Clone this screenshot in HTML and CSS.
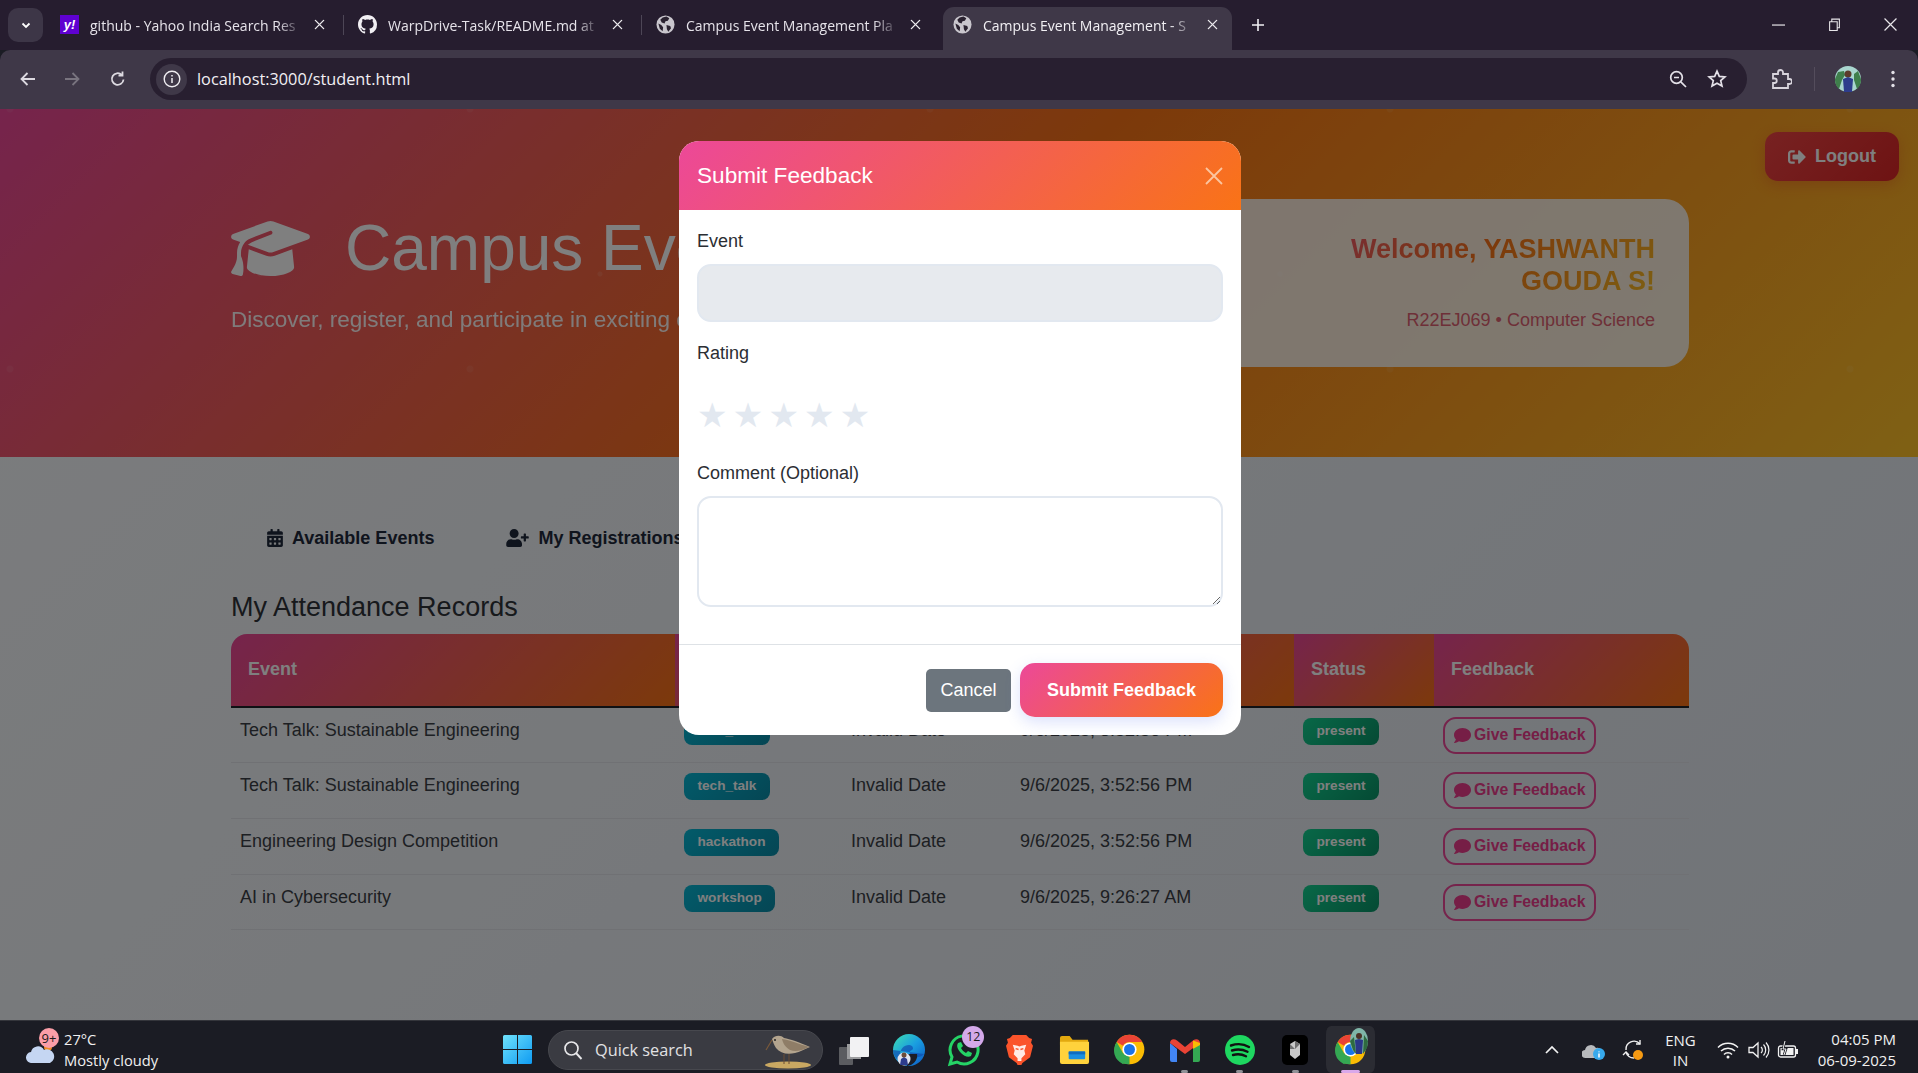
FILE: index.html
```html
<!DOCTYPE html>
<html lang="en">
<head>
<meta charset="utf-8">
<title>Campus Event Management - Student</title>
<link rel="stylesheet" href="styles.css">
</head>
<body>
<svg class="sprite" aria-hidden="true">
  <symbol id="i-comment" viewBox="0 0 512 512"><path fill="currentColor" d="M256 32C114.6 32 0 125.1 0 240c0 49.6 21.4 95 57 130.7C44.5 421.1 2.7 466 2.2 466.5c-2.2 2.3-2.8 5.7-1.5 8.7S4.8 480 8 480c66.3 0 116-31.8 140.6-51.4 32.7 12.3 69 19.4 107.4 19.4 141.4 0 256-93.1 256-208S397.4 32 256 32z"/></symbol>
  <symbol id="i-x" viewBox="0 0 12 12"><path d="M1.5 1.5l9 9M10.500 1.500l-9 9" stroke="currentColor" stroke-width="1.500" fill="none" stroke-linecap="round"/></symbol>
  <symbol id="i-globe" viewBox="0 0 20 20"><circle cx="10" cy="10" r="9.500" fill="#c9c6cd"/><path fill="#2a2230" d="M7 2.500l4-.8 3 1.800-1.500 2.500-2.500.5-1 2.500-3-1-1.500-3zM11 10.500l4 1 .8 2.500-2.800 3.500-1.500-2.500zM2.500 9l3 1.500 2 2.500-.5 4L4 14.500z"/></symbol>
  <symbol id="i-chrome" viewBox="0 0 48 48">
    <circle cx="24" cy="24" r="23" fill="#fbbc04"/>
    <path fill="#ea4335" d="M24 1a23 23 0 0 1 19.900 11.500H24a11.500 11.500 0 0 0-10 5.800L4.100 12.500A23 23 0 0 1 24 1z"/>
    <path fill="#34a853" d="M4.100 12.500L14 29.700a11.500 11.500 0 0 0 10 5.800L14.100 46.700A23 23 0 0 1 4.100 12.500z"/>
    <path fill="#34a853" d="M14 29.700L24 35.500 24 47A23 23 0 0 1 4 35.500z"/>
    <circle cx="24" cy="24" r="11" fill="#fff"/><circle cx="24" cy="24" r="8.500" fill="#1a73e8"/>
  </symbol>
</svg>

<header class="tabstrip">
  <button class="tablist"><svg width="12" height="12" viewBox="0 0 12 12"><path d="M2.500 4.500L6 8l3.500-3.500" stroke="#fff" stroke-width="1.800" fill="none"/></svg></button>
  <div class="tab">
    <span class="yahoo">y!</span>
    <span class="tab-title">github - Yahoo India Search Res</span>
    <svg class="tab-close"><use href="#i-x"/></svg>
  </div>
  <i class="tab-sep"></i>
  <div class="tab">
    <svg class="fav" viewBox="0 0 16 16"><path fill="#f1eff3" d="M8 0C3.580 0 0 3.580 0 8c0 3.540 2.290 6.530 5.470 7.590.4.070.55-.17.55-.38 0-.19-.01-.82-.01-1.490-2.010.37-2.530-.49-2.690-.94-.09-.23-.48-.94-.82-1.130-.28-.15-.68-.52-.01-.53.63-.01 1.080.58 1.230.82.720 1.210 1.870.87 2.330.66.070-.52.280-.87.510-1.070-1.780-.2-3.640-.89-3.640-3.950 0-.87.310-1.590.820-2.150-.08-.2-.36-1.020.08-2.120 0 0 .67-.21 2.200.820.64-.18 1.320-.27 2-.27s1.360.09 2 .27c1.530-1.040 2.200-.82 2.200-.82.44 1.100.16 1.920.08 2.120.51.560.82 1.270.82 2.150 0 3.070-1.870 3.750-3.650 3.950.29.250.54.730.54 1.480 0 1.070-.01 1.930-.01 2.200 0 .21.150.46.550.38A8.010 8.010 0 0 0 16 8c0-4.420-3.580-8-8-8z"/></svg>
    <span class="tab-title">WarpDrive-Task/README.md at</span>
    <svg class="tab-close"><use href="#i-x"/></svg>
  </div>
  <i class="tab-sep"></i>
  <div class="tab">
    <svg class="fav"><use href="#i-globe"/></svg>
    <span class="tab-title">Campus Event Management Pla</span>
    <svg class="tab-close"><use href="#i-x"/></svg>
  </div>
  <div class="tab tab-active">
    <svg class="fav"><use href="#i-globe"/></svg>
    <span class="tab-title">Campus Event Management - S</span>
    <svg class="tab-close"><use href="#i-x"/></svg>
  </div>
  <svg class="newtab" viewBox="0 0 14 14"><path d="M7 1v12M1 7h12" stroke="#f1eff3" stroke-width="1.600"/></svg>
  <div class="winctl">
    <svg viewBox="0 0 12 12"><path d="M0 6.500h12" stroke="#e8e6ea" stroke-width="1.100"/></svg>
    <svg viewBox="0 0 12 12"><path d="M1.500 3.500h7v8h-7zM3.500 3.500v-2.500h7v8h-2" stroke="#e8e6ea" fill="none"/></svg>
    <svg viewBox="0 0 12 12"><path d="M.5.500l11 11M11.500.500l-11 11" stroke="#e8e6ea" stroke-width="1.100"/></svg>
  </div>
</header>

<nav class="toolbar">
  <svg class="tool" viewBox="0 0 20 20"><path d="M17 10H4M9.500 4L3.500 10l6 6" stroke="#dcd9e0" stroke-width="1.800" fill="none"/></svg>
  <svg class="tool" viewBox="0 0 20 20"><path d="M3 10h13M10.500 4l6 6-6 6" stroke="#79747f" stroke-width="1.800" fill="none"/></svg>
  <svg class="tool" viewBox="0 0 20 20"><path d="M15.500 10.500a5.800 5.800 0 1 1-1.800-4.700M14.500 2.500v4h-4" stroke="#dcd9e0" stroke-width="1.800" fill="none"/></svg>
  <div class="omnibox">
    <span class="site-info"><svg viewBox="0 0 18 18" width="18" height="18"><circle cx="9" cy="9" r="7.800" stroke="#efedf1" stroke-width="1.400" fill="none"/><path d="M9 8v5M9 5v1.600" stroke="#efedf1" stroke-width="1.500"/></svg></span>
    <span class="url">localhost:3000/student.html</span>
    <svg class="omni-icon zoomout" viewBox="0 0 20 20"><circle cx="8.500" cy="8.500" r="5.800" stroke="#e4e1e8" stroke-width="1.700" fill="none"/><path d="M12.800 12.800L18 18M6 8.500h5" stroke="#e4e1e8" stroke-width="1.700"/></svg>
    <svg class="omni-icon" viewBox="0 0 20 20"><path d="M10 2.200l2.300 5.200 5.600.5-4.200 3.700 1.300 5.500L10 14.200 5 17.100l1.300-5.500-4.200-3.700 5.600-.5z" stroke="#e4e1e8" stroke-width="1.700" fill="none"/></svg>
  </div>
  <svg class="ext" viewBox="0 0 22 22"><path d="M3 6h5V4.500a2.500 2.500 0 0 1 5 0V6h5v5h1.500a2.500 2.500 0 0 1 0 5H18v4H3v-5h1.500a2 2 0 0 0 0-4.500H3z" stroke="#d8d4dc" stroke-width="1.800" fill="none"/></svg>
  <i class="tool-sep"></i>
  <svg class="avatar" viewBox="0 0 26 26"><circle cx="13" cy="13" r="13" fill="#a9d6cf"/><path d="M0 13a13 13 0 0 0 4 10l3-9 3-5-1-4-6 1z" fill="#3f7f4c"/><path d="M26 13a13 13 0 0 1-4 10l-3-9 0-6 4-3z" fill="#3f7f4c"/><circle cx="13" cy="8" r="3.500" fill="#5c3b2c"/><path d="M8 13l5-2 5 2-1 13H9z" fill="#2d3c8c"/></svg>
  <svg class="kebab" viewBox="0 0 4 18"><circle cx="2" cy="2.500" r="1.700" fill="#e4e1e8"/><circle cx="2" cy="9" r="1.700" fill="#e4e1e8"/><circle cx="2" cy="15.500" r="1.700" fill="#e4e1e8"/></svg>
</nav>

<div class="viewport">
  <section class="hero">
    <div class="hero-inner">
      <div class="hero-text">
        <h1 class="hero-title">
          <svg class="cap" viewBox="0 0 640 512"><path fill="currentColor" d="M320 32c-8.100 0-16.100 1.400-23.700 4.100L15.800 137.400C6.300 140.900 0 149.900 0 160s6.300 19.100 15.800 22.600l57.900 20.900C57.300 229.300 48 259.800 48 291.900v28.100c0 28.400-10.800 57.700-22.300 80.800c-6.500 13-13.900 25.800-22.500 37.600C0 442.700-.9 448.300 .9 453.400s6 8.900 11.200 10.200l64 16c4.200 1.100 8.700 .3 12.400-2s6.300-6.100 7.100-10.400c8.600-42.800 4.300-81.200-2.100-108.700C90.300 344.300 86 329.800 80 316.500V291.900c0-30.200 10.200-58.700 27.900-81.500c12.900-15.500 29.600-28 49.200-35.700l157-61.700c8.200-3.200 17.500 .8 20.700 9s-.8 17.500-9 20.700l-157 61.700c-12.400 4.900-23.300 12.400-32.200 21.600l159.600 57.600c7.600 2.700 15.600 4.100 23.700 4.100s16.100-1.400 23.700-4.100L624.200 182.600c9.500-3.400 15.800-12.500 15.800-22.600s-6.300-19.100-15.800-22.600L343.700 36.100C336.100 33.400 328.100 32 320 32zM128 408c0 35.300 86 72 192 72s192-36.700 192-72L496.700 262.600 354.500 314c-11.100 4-22.800 6-34.500 6s-23.500-2-34.500-6L143.300 262.600 128 408z"/></svg>
          Campus Event Management
        </h1>
        <p class="hero-sub">Discover, register, and participate in exciting events</p>
      </div>
      <div class="welcome">
        <div class="welcome-name">Welcome, YASHWANTH GOUDA S!</div>
        <div class="welcome-meta">R22EJ069 • Computer Science</div>
      </div>
    </div>
    <button class="logout">
      <svg viewBox="0 0 512 512" width="18" height="18"><path fill="currentColor" d="M497 273L329 441c-15 15-41 4.500-41-17v-96H152c-13.300 0-24-10.700-24-24v-96c0-13.300 10.700-24 24-24h136V88c0-21.400 25.900-32 41-17l168 168c9.300 9.400 9.300 24.600 0 34zM192 436v-40c0-6.600-5.400-12-12-12H96c-17.700 0-32-14.300-32-32V160c0-17.700 14.300-32 32-32h84c6.600 0 12-5.400 12-12V76c0-6.600-5.400-12-12-12H96c-53 0-96 43-96 96v192c0 53 43 96 96 96h84c6.600 0 12-5.400 12-12z"/></svg>
      Logout
    </button>
  </section>

  <main class="content">
    <div class="navtabs">
      <a class="navtab">
        <svg class="navicon" viewBox="0 0 448 512"><path fill="currentColor" d="M0 464c0 26.500 21.500 48 48 48h352c26.500 0 48-21.500 48-48V192H0v272zm320-196c0-6.600 5.400-12 12-12h40c6.600 0 12 5.400 12 12v40c0 6.600-5.400 12-12 12h-40c-6.600 0-12-5.400-12-12v-40zm0 128c0-6.600 5.400-12 12-12h40c6.600 0 12 5.400 12 12v40c0 6.600-5.400 12-12 12h-40c-6.600 0-12-5.400-12-12v-40zM192 268c0-6.600 5.400-12 12-12h40c6.600 0 12 5.400 12 12v40c0 6.600-5.400 12-12 12h-40c-6.600 0-12-5.400-12-12v-40zm0 128c0-6.600 5.400-12 12-12h40c6.600 0 12 5.400 12 12v40c0 6.600-5.400 12-12 12h-40c-6.600 0-12-5.400-12-12v-40zM64 268c0-6.600 5.400-12 12-12h40c6.600 0 12 5.400 12 12v40c0 6.600-5.400 12-12 12H76c-6.600 0-12-5.400-12-12v-40zm0 128c0-6.600 5.400-12 12-12h40c6.600 0 12 5.400 12 12v40c0 6.600-5.400 12-12 12H76c-6.600 0-12-5.400-12-12v-40zM400 64h-48V16c0-8.800-7.200-16-16-16h-32c-8.800 0-16 7.200-16 16v48H160V16c0-8.800-7.200-16-16-16h-32c-8.800 0-16 7.200-16 16v48H48C21.500 64 0 85.500 0 112v48h448v-48c0-26.500-21.500-48-48-48z"/></svg>
        Available Events
      </a>
      <a class="navtab">
        <svg class="navicon navicon-wide" viewBox="0 0 640 512"><path fill="currentColor" d="M624 208h-64v-64c0-8.800-7.200-16-16-16h-32c-8.800 0-16 7.200-16 16v64h-64c-8.800 0-16 7.200-16 16v32c0 8.800 7.200 16 16 16h64v64c0 8.800 7.200 16 16 16h32c8.800 0 16-7.200 16-16v-64h64c8.800 0 16-7.200 16-16v-32c0-8.800-7.200-16-16-16zm-400 48c70.700 0 128-57.300 128-128S294.700 0 224 0 96 57.300 96 128s57.300 128 128 128zm89.600 32h-16.700c-22.200 10.200-46.900 16-72.900 16s-50.600-5.800-72.900-16h-16.700C60.200 288 0 348.200 0 422.400V464c0 26.500 21.500 48 48 48h352c26.500 0 48-21.500 48-48v-41.600c0-74.200-60.200-134.400-134.400-134.400z"/></svg>
        My Registrations
      </a>
    </div>
    <h2 class="section-title">My Attendance Records</h2>
    <table class="records">
      <colgroup><col class="c-event"><col class="c-type"><col class="c-date"><col class="c-att"><col class="c-status"><col class="c-fb"></colgroup>
      <thead><tr><th>Event</th><th>Type</th><th>Date</th><th>Attended At</th><th>Status</th><th>Feedback</th></tr></thead>
      <tbody>
        <tr><td>Tech Talk: Sustainable Engineering</td><td><span class="badge badge-type">tech_talk</span></td><td>Invalid Date</td><td>9/6/2025, 3:52:56 PM</td><td><span class="badge badge-ok">present</span></td><td><button class="fb-btn"><svg class="fb-icon"><use href="#i-comment"/></svg>Give Feedback</button></td></tr>
        <tr><td>Tech Talk: Sustainable Engineering</td><td><span class="badge badge-type">tech_talk</span></td><td>Invalid Date</td><td>9/6/2025, 3:52:56 PM</td><td><span class="badge badge-ok">present</span></td><td><button class="fb-btn"><svg class="fb-icon"><use href="#i-comment"/></svg>Give Feedback</button></td></tr>
        <tr><td>Engineering Design Competition</td><td><span class="badge badge-type">hackathon</span></td><td>Invalid Date</td><td>9/6/2025, 3:52:56 PM</td><td><span class="badge badge-ok">present</span></td><td><button class="fb-btn"><svg class="fb-icon"><use href="#i-comment"/></svg>Give Feedback</button></td></tr>
        <tr><td>AI in Cybersecurity</td><td><span class="badge badge-type">workshop</span></td><td>Invalid Date</td><td>9/6/2025, 9:26:27 AM</td><td><span class="badge badge-ok">present</span></td><td><button class="fb-btn"><svg class="fb-icon"><use href="#i-comment"/></svg>Give Feedback</button></td></tr>
      </tbody>
    </table>
  </main>

  <div class="backdrop"></div>

  <div class="modal">
    <div class="modal-head">
      <h3 class="modal-title">Submit Feedback</h3>
      <svg class="modal-close" viewBox="0 0 18 18"><path d="M1 1l16 16M17 1L1 17" stroke="#fbc5a0" stroke-width="1.800"/></svg>
    </div>
    <div class="modal-body">
      <label class="field-label">Event</label>
      <select class="field-select" disabled><option></option></select>
      <label class="field-label">Rating</label>
      <div class="stars"><span class="star">★</span><span class="star">★</span><span class="star">★</span><span class="star">★</span><span class="star">★</span></div>
      <label class="field-label">Comment (Optional)</label>
      <textarea class="field-text"></textarea>
    </div>
    <div class="modal-foot">
      <button class="btn-cancel">Cancel</button>
      <button class="btn-submit">Submit Feedback</button>
    </div>
  </div>
</div>

<footer class="taskbar">
  <div class="weather">
    <span class="wx-icon">
      <svg viewBox="0 0 32 26" width="32" height="26"><circle cx="23" cy="10" r="4" fill="#f08a24"/><path d="M7 26a5.500 5.500 0 0 1-1-11 7 7 0 0 1 13-2 6.500 6.500 0 0 1 6 13z" fill="#c5d6f2"/></svg>
      <span class="wx-badge">9+</span>
    </span>
    <span class="wx-text"><span class="wx-temp">27°C</span><span class="wx-desc">Mostly cloudy</span></span>
  </div>
  <svg class="winlogo" viewBox="0 0 29 29"><defs><linearGradient id="wg" x1="0" y1="0" x2="1" y2="1"><stop offset="0" stop-color="#6fe2fb"/><stop offset="1" stop-color="#0f9bf2"/></linearGradient></defs><path fill="url(#wg)" d="M0 1.500A1.500 1.500 0 0 1 1.500 0H14v14H0zM15 0h12.500A1.500 1.500 0 0 1 29 1.500V14H15zM0 15h14v14H1.500A1.500 1.500 0 0 1 0 27.500zM15 15h14v12.500a1.500 1.500 0 0 1-1.500 1.500H15z"/></svg>
  <div class="searchbox">
    <svg viewBox="0 0 20 20" width="20" height="20"><circle cx="8.500" cy="8.500" r="6.500" stroke="#e8e8ea" stroke-width="1.700" fill="none"/><path d="M13 13l5.500 6" stroke="#e8e8ea" stroke-width="1.900"/></svg>
    <span class="search-text">Quick search</span>
    <svg class="bird" viewBox="0 0 50 38" width="50" height="38"><ellipse cx="26" cy="34" rx="23" ry="3.500" fill="#c9a862"/><path d="M10 8c3-4 9-4 12-1 6 1 15 4 26 9-6 2-10 5-15 6-8 2-15 0-19-5-2-3-3-6-4-9z" fill="#b3a48e"/><path d="M20 8c8 1 17 5 27 8-8 4-14 5-19 3-5-3-7-7-8-11z" fill="#8f7d67"/><path d="M10 9L4 19" stroke="#7a5a3a" stroke-width="1.200"/><path d="M22 23v10M27 23v10" stroke="#6a4d33"/><circle cx="13" cy="9" r="1" fill="#222"/></svg>
  </div>
  <div class="tb-apps">
    <span class="tb-app"><svg viewBox="0 0 30 30" width="30" height="30"><rect x="0" y="12" width="14" height="18" rx="1" fill="#5b5c60"/><rect x="8" y="9" width="14" height="15" fill="#9b9c9e"/><rect x="11" y="2" width="19" height="20" rx="1" fill="#f2f2f3"/></svg></span>
    <span class="tb-app"><svg viewBox="0 0 32 32" width="32" height="32"><defs><linearGradient id="eg" x1="0" y1="0" x2="1" y2="1"><stop offset="0" stop-color="#3ee0b0"/><stop offset=".5" stop-color="#1a9ee0"/><stop offset="1" stop-color="#0b57c4"/></linearGradient></defs><circle cx="16" cy="16" r="16" fill="url(#eg)"/><path d="M31 20c-3 4-9 4-12 2-3-2-3-5 0-6 2-1 1-5-3-5-5 0-9 4-9 10 0 3 1 6 3 8-6-2-10-7-10-13" fill="#0f4fb0" opacity=".7"/><path d="M14 32V20h10c1 4-2 9-6 11z" fill="#1c1d26"/><circle cx="11" cy="25" r="6.500" fill="#dfe4f0"/><path d="M7 31l1-6 3-2 3 2 1 6z" fill="#2d3c8c"/><circle cx="11" cy="21" r="2.500" fill="#6b4a38"/></svg></span>
    <span class="tb-app"><svg viewBox="0 0 34 34" width="34" height="34"><path d="M3 31l2-7a14 14 0 1 1 5 5z" fill="none" stroke="#25d366" stroke-width="3"/><path d="M11 10c-2 3 0 7 3 10s7 5 10 3l1-3-4-2-2 2c-2-1-4-3-5-5l2-2-2-4z" fill="#25d366"/></svg><span class="tb-badge">12</span></span>
    <span class="tb-app"><svg viewBox="0 0 28 32" width="27" height="31"><path d="M7 1h14l3 3 3 1-1 4 2 3-3 12-8 6-1 2h-4l-1-2-8-6L0 12l2-3-1-4 3-1z" fill="#fb542b"/><path d="M7 11l5 1 2 1 2-1 5-1-2 6 1 4-4 4v3h-4v-3l-4-4 1-4z" fill="#fff" opacity=".88"/><path d="M10 15l3 1M18 15l-3 1" stroke="#fb542b" stroke-width="1.400"/></svg></span>
    <span class="tb-app"><svg viewBox="0 0 32 32" width="31" height="31"><path d="M1 4a2 2 0 0 1 2-2h8l3 4h16v5H1z" fill="#e3a90f"/><path d="M1 8h30v21a2 2 0 0 1-2 2H3a2 2 0 0 1-2-2z" fill="#ffd23c"/><rect x="10" y="18" width="17" height="8" rx="1" fill="#1b8fe0"/><rect x="10" y="18" width="17" height="3" fill="#0f6cc0"/></svg></span>
    <span class="tb-app"><svg width="31" height="31"><use href="#i-chrome"/></svg></span>
    <span class="tb-app"><svg viewBox="0 0 30 24" width="30" height="24"><path d="M0 5v17a2 2 0 0 0 2 2h5V11z" fill="#4285f4"/><path d="M30 5v17a2 2 0 0 1-2 2h-5V11z" fill="#34a853"/><path d="M0 5l15 11 0-7L7 2.500C4 0 0 1 0 5z" fill="#ea4335"/><path d="M30 5L15 16V9l8-6.500C26 0 30 1 30 5z" fill="#ea4335"/><path d="M23 2.500L30 5v2l-7 4z" fill="#fbbc04"/></svg></span>
    <span class="tb-app"><svg viewBox="0 0 30 30" width="30" height="30"><circle cx="15" cy="15" r="15" fill="#1ed760"/><path d="M6 10.500c6-2 13-1.500 18 1.500M7 15.500c5-1.500 11-1 15.500 1.300M8 20c4.500-1.200 9-.8 13 1.200" stroke="#111" stroke-width="2.400" fill="none" stroke-linecap="round"/></svg></span>
    <span class="tb-app"><svg viewBox="0 0 26 30" width="26" height="30"><rect width="26" height="30" rx="5" fill="#000"/><path d="M8 9l5-3 5 3v11l-5 4-5-4z" fill="#c8c8c8"/><path d="M13 6v8l5-5zM13 14l-5-5v5z" fill="#6e6e6e"/></svg></span>
    <span class="tb-app tb-active"><svg width="31" height="31"><use href="#i-chrome"/></svg><svg class="tb-over" viewBox="0 0 18 26" width="18" height="26"><ellipse cx="9" cy="13" rx="9" ry="13" fill="#7fb6a8"/><path d="M0 13l4-4 2 17-3-4zM18 13l-4-6-1 19 4-6z" fill="#2e6b40"/><circle cx="9" cy="8" r="3" fill="#4c3125"/><path d="M5 12l4-1 4 1-1 14H6z" fill="#2a3788"/></svg></span>
  </div>
  <div class="tray">
    <svg viewBox="0 0 14 9" width="14" height="9"><path d="M1 8l6-6 6 6" stroke="#f2f2f2" stroke-width="1.700" fill="none"/></svg>
    <svg class="tray-od" viewBox="0 0 24 22" width="24" height="22"><path d="M4 19a4 4 0 0 1-1-8 6 6 0 0 1 11-2 5 5 0 0 1 3 10z" fill="#b8babd"/><circle cx="17" cy="15" r="6" fill="#37a9ec"/><path d="M17 12.500v.800M17 14.500v4" stroke="#fff" stroke-width="1.500"/></svg>
    <svg class="tray-sync" viewBox="0 0 24 24" width="24" height="24"><path d="M4 12A8 8 0 0 1 18 6M12 20a8 8 0 0 1-8-6" stroke="#f0f0f0" stroke-width="1.400" fill="none"/><path d="M18 2v4h-4M1 17l3-3 3 3" stroke="#f0f0f0" stroke-width="1.400" fill="none"/><circle cx="16" cy="17" r="5" fill="#f59a13"/></svg>
    <span class="lang"><span>ENG</span><span>IN</span></span>
    <svg class="tray-wifi" viewBox="0 0 22 18" width="22" height="18"><path d="M1 6.500a14 14 0 0 1 20 0M4 10a10 10 0 0 1 14 0M7 13.500a5.500 5.500 0 0 1 8 0" stroke="#f2f2f2" stroke-width="1.500" fill="none"/><circle cx="11" cy="16" r="1.500" fill="#f2f2f2"/></svg>
    <svg class="tray-vol" viewBox="0 0 22 18" width="22" height="18"><path d="M1 6.500h4l5-4.500v14l-5-4.500H1z" stroke="#f2f2f2" stroke-width="1.300" fill="none"/><path d="M13 6a4 4 0 0 1 0 6M15.500 3.500a8 8 0 0 1 0 11M18 1.500a11 11 0 0 1 0 15" stroke="#f2f2f2" stroke-width="1.200" fill="none"/></svg>
    <svg viewBox="0 0 22 18" width="22" height="18"><rect x="1.500" y="5" width="17" height="11" rx="2" stroke="#f2f2f2" stroke-width="1.300" fill="none"/><rect x="3.500" y="7" width="13" height="7" fill="#f2f2f2"/><path d="M20 8v5" stroke="#f2f2f2" stroke-width="2"/><path d="M8 0L6 8h3l-2 6" stroke="#1b1c24" stroke-width="2.500" fill="none"/><path d="M8 0L6 8h3l-2 6" stroke="#f2f2f2" stroke-width="1" fill="none"/></svg>
    <span class="clock"><span>04:05 PM</span><span>06-09-2025</span></span>
  </div>
</footer>
</body>
</html>
```

FILE: styles.css
```css
* { box-sizing: border-box; }
html, body { margin: 0; height: 100%; }
body {
  width: 1918px;
  height: 1073px;
  overflow: hidden;
  font-family: "Liberation Sans", Arial, sans-serif;
  display: flex;
  flex-direction: column;
  background: #1b1c24;
}
.sprite { display: none; }
button { font-family: inherit; border: 0; cursor: pointer; }

/* Browser tab strip */
.tabstrip {
  height: 50px;
  flex: none;
  display: flex;
  align-items: flex-start;
  background: #261d2f;
  padding-left: 8px;
  font-family: "Open Sans", sans-serif;
  font-size: 14px;
  color: #e6e3ea;
}
.tablist {
  width: 35px; height: 34px; margin-top: 8px; margin-right: 7px;
  border-radius: 10px; background: #3d3647;
  display: flex; align-items: center; justify-content: center; padding: 0;
}
.tab {
  width: 293px; height: 43px; margin-top: 7px;
  display: flex; align-items: center;
  padding: 0 18px 8px 10px;
  gap: 11px;
  flex: none;
}
.tab-sep { width: 1px; height: 20px; margin-top: 15px; background: #4d4656; flex: none; margin-right: 4px; }
.tab-title {
  flex: 1; white-space: nowrap; overflow: hidden; padding-top: 1px;
  -webkit-mask-image: linear-gradient(90deg, #000 88%, transparent 100%);
  mask-image: linear-gradient(90deg, #000 88%, transparent 100%);
}
.tab-close { width: 11px; height: 11px; color: #eceaee; flex: none; }
.fav { width: 19px; height: 19px; flex: none; }
.yahoo {
  width: 19px; height: 19px; flex: none; background: #5f01d1; color: #fff;
  font: italic 700 13px/19px "Liberation Sans", sans-serif; text-align: center;
}
.tab-active {
  width: 289px; margin-left: 4px; height: 43px; background: #3f3848;
  border-radius: 11px 11px 0 0; padding: 0 14px 8px 10px; color: #f2f0f4;
}
.newtab { width: 14px; height: 14px; margin: 18px 0 0 19px; flex: none; }
.winctl { margin-left: auto; display: flex; gap: 43px; margin-top: 18px; padding-right: 21px; }
.winctl svg { width: 13px; height: 13px; }

/* Toolbar */
.toolbar {
  height: 59px; flex: none; background: #3f3848;
  border-radius: 10px 10px 0 0;
  display: flex; align-items: center;
  padding: 0 0 1px 18px;
  margin-top: 0;
}
.tool { width: 20px; height: 20px; margin-right: 24px; flex: none; }
.tool:nth-child(2) { margin-right: 26px; }
.tool:nth-child(3) { margin-right: 22px; }
.omnibox {
  width: 1597px; height: 42px; background: #281f30; border-radius: 21px;
  display: flex; align-items: center; padding: 0 20px 0 6px; flex: none;
  margin-left: 0;
}
.site-info {
  width: 31px; height: 31px; border-radius: 50%; background: #3f3848;
  display: flex; align-items: center; justify-content: center; flex: none;
}
.url { margin-left: 10px; font: 16.300px "Open Sans", sans-serif; color: #f2f0f4; flex: 1; }
.omni-icon { width: 20px; height: 20px; flex: none; }
.zoomout { margin-right: 19px; }
.ext { width: 22px; height: 22px; margin-left: 23px; flex: none; }
.tool-sep { width: 1px; height: 24px; background: #544d5c; margin-left: 22px; flex: none; }
.avatar { width: 26px; height: 26px; margin-left: 20px; flex: none; }
.kebab { width: 4px; height: 18px; margin-left: 30px; flex: none; }

/* Page area */
.viewport {
  position: relative;
  flex: 1;
  min-height: 0;
  overflow: hidden;
  background: linear-gradient(135deg, #f8fafc 0%, #e2e8f0 100%);
}
.hero {
  height: 348px;
  position: relative;
  color: #fff;
  background:
    radial-gradient(circle, rgba(255,255,255,.1) 2px, transparent 3px) 90px 60px / 340px 210px,
    radial-gradient(circle, rgba(255,255,255,.07) 3px, transparent 4px) 240px 130px / 460px 260px,
    linear-gradient(135deg, #ec4899 0%, #f97316 50%, #ffc229 100%);
  display: flex;
  align-items: center;
  padding-left: 231px;
}
.hero-inner {
  width: 1458px;
  display: flex;
  justify-content: space-between;
  align-items: center;
}
.hero-text { padding-bottom: 21.600px; }
.hero-title {
  margin: 0 0 17.600px;
  font-size: 64px;
  line-height: 77px;
  font-weight: 400;
  display: flex;
  align-items: center;
  gap: 35px;
  white-space: nowrap;
}
.cap { width: 79px; height: 63px; flex: none; }
.hero-sub { margin: 0; font-size: 22.500px; line-height: 30px; opacity: .95; white-space: nowrap; }
.welcome {
  width: 480px;
  height: 168px;
  border-radius: 24px;
  background: rgba(255,255,255,.85);
  padding: 34px 34px 0;
  text-align: right;
  flex: none;
}
.welcome-name {
  font-size: 27px; line-height: 32px; font-weight: 700;
  background: linear-gradient(135deg, #ec4899, #f97316 55%, #fbbf24);
  -webkit-background-clip: text; background-clip: text;
  color: transparent;
}
.welcome-meta { margin-top: 11px; font-size: 18px; line-height: 24px; color: #dd6070; }
.logout {
  position: absolute; right: 19px; top: 23px;
  width: 134px; height: 49px; border-radius: 13px;
  background: linear-gradient(135deg, #ef4444, #dc2626);
  color: #fff; font-size: 18px; font-weight: 700;
  display: flex; align-items: center; justify-content: center; gap: 9px;
  box-shadow: 0 4px 14px rgba(220,38,38,.25);
}
.content { width: 1458px; margin-left: 231px; padding-top: 61px; }
.navtabs { display: flex; height: 40px; margin-bottom: 32px; }
.navtab {
  padding: 0 36px; display: flex; align-items: center; gap: 9px;
  font-size: 18px; font-weight: 700; color: #1e293b; white-space: nowrap;
}
.navicon { width: 16px; height: 18px; flex: none; }
.navicon-wide { width: 23px; }
.section-title { margin: 0 0 10px; font-size: 27px; line-height: 34px; font-weight: 400; color: #2e3238; }
.records { width: 1458px; table-layout: fixed; border-collapse: separate; border-spacing: 0; }
.c-event { width: 444px; } .c-type { width: 167px; } .c-date { width: 169px; }
.c-att { width: 283px; } .c-status { width: 140px; } .c-fb { width: 255px; }
.records th {
  height: 74px; padding: 0 17px 2px; text-align: left;
  font-size: 18px; font-weight: 700; color: #fff;
  background: linear-gradient(135deg, #ec4899, #f97316);
  border-bottom: 2px solid #1f2329;
}
.records th:first-child { border-top-left-radius: 16px; }
.records th:last-child { border-top-right-radius: 16px; }
.records td {
  height: 56px; padding: 10px 9px 0; vertical-align: top;
  font-size: 18px; line-height: 24px; color: #3b3f46;
  border-bottom: 1px solid #e0e3e8;
}
.records tr:first-child td, .records tr:last-child td { height: 55px; }
.badge {
  display: inline-block; vertical-align: top; height: 27px; padding: 0 13.500px; border-radius: 8px;
  font-size: 13.600px; font-weight: 700; line-height: 26px; color: #fff;
}
.badge-type { background: linear-gradient(135deg, #06b6d4, #0a8ca8); }
.badge-ok { background: linear-gradient(135deg, #12d090, #0a9468); }
.fb-btn {
  display: inline-flex; vertical-align: top; align-items: center; gap: 3px;
  height: 37px; width: 153px; padding: 0 0 1px 9px; margin-top: -1px;
  border: 2px solid #ec4899; border-radius: 13px; background: transparent;
  color: #ec3c8c; font-size: 15.800px; font-weight: 700; white-space: nowrap;
}
.fb-icon { width: 17px; height: 17px; flex: none; }

/* Modal over dimmed page */
.backdrop { position: absolute; inset: 0; background: rgba(0,0,0,.5); }
.modal {
  position: absolute; top: 32px; left: 679px; width: 562px; height: 594px;
  background: #fff; border-radius: 20px; overflow: hidden;
  display: flex; flex-direction: column;
}
.modal-head {
  height: 69px; flex: none; padding: 0 18px;
  display: flex; align-items: center; justify-content: space-between;
  background: linear-gradient(135deg, #ec4899, #f97316);
}
.modal-title { margin: 0; font-size: 22.600px; font-weight: 400; color: #fff; }
.modal-close { width: 18px; height: 18px; flex: none; }
.modal-body { flex: 1; padding: 18px 18px 0; display: flex; flex-direction: column; }
.field-label { display: block; height: 26px; font-size: 18px; line-height: 26px; color: #2b2e33; margin-bottom: 10px; }
.field-select {
  appearance: none; -webkit-appearance: none; display: block; width: 100%; height: 58px;
  margin-bottom: 18px; background: #e7eaee; border: 2px solid #e2e8f0; border-radius: 14px; opacity: 1;
}
.stars { display: flex; height: 66px; margin-top: -1px; margin-bottom: 19px; align-items: flex-end; padding-bottom: 6px; }
.star { width: 35.700px; font: 34px/40px "DejaVu Sans", sans-serif; color: #e2e8f0; }
.field-text {
  display: block; width: 100%; height: 111px; flex: none; border: 2px solid #e2e8f0; border-radius: 14px;
  background: #fff; resize: vertical; outline: 0;
}
.modal-foot {
  height: 91px; flex: none; border-top: 1px solid #dee2e6; padding: 0 18px;
  display: flex; align-items: center; justify-content: flex-end; gap: 9px;
}
.btn-cancel { width: 85px; height: 43px; border-radius: 5px; background: #6c757d; color: #fff; font-size: 18px; }
.btn-submit {
  width: 203px; height: 54px; border-radius: 15px; color: #fff; font-size: 18px; font-weight: 700;
  background: linear-gradient(135deg, #ec4899, #f97316);
  box-shadow: 0 5px 15px rgba(90,120,240,.22);
}

/* Taskbar */
.taskbar {
  height: 53px; flex: none; display: flex; align-items: center;
  padding-top: 5px;
  background: #1b1c24; border-top: 1px solid #34353b;
  color: #f0f0f0; font-family: "Open Sans", sans-serif; font-size: 14.700px;
}
.weather { width: 503px; display: flex; align-items: center; padding-left: 25px; gap: 7px; flex: none; }
.wx-icon { position: relative; width: 32px; height: 26px; }
.wx-badge {
  position: absolute; left: 14px; top: -9px; width: 20px; height: 20px; border-radius: 50%;
  background: #fb9ea8; color: #1a1a1a; font-size: 13px; line-height: 20px; text-align: center;
}
.wx-text { display: flex; flex-direction: column; line-height: 21px; }
.winlogo { width: 29px; height: 29px; flex: none; margin-right: 16px; }
.searchbox {
  width: 275px; height: 40px; border-radius: 20px; background: #3a3b42; border: 1px solid #47484e;
  display: flex; align-items: center; padding: 0 10px 0 14px; gap: 12px; flex: none;
}
.search-text { flex: 1; font-size: 16.300px; color: #e2e2e4; }
.bird { flex: none; }
.tb-apps { display: flex; margin-left: 3px; flex: none; }
.tb-app { width: 55.200px; height: 47px; display: flex; align-items: center; justify-content: center; position: relative; }
.tb-badge {
  position: absolute; left: 26px; top: 0; width: 22px; height: 22px; border-radius: 50%;
  background: #d4a9ea; color: #1a1a1a; font-size: 12.500px; line-height: 22px; text-align: center;
}
.tb-app:nth-child(n+7)::after {
  content: ""; position: absolute; bottom: 0; left: 24px; width: 7px; height: 3px; border-radius: 2px; background: #8f9096;
}
.tb-active { background: #2b2c33; background-clip: padding-box; border: solid transparent; border-width: 0 3px; border-radius: 8px; }
.tb-app.tb-active::after { left: 15px; width: 19px; background: #d9a8ea; }
.tb-over { position: absolute; left: 24px; top: 2px; }
.tray { margin-left: auto; display: flex; align-items: center; padding-right: 22px; flex: none; }
.tray-od { margin-left: 23px; }
.tray-sync { margin-left: 16px; }
.lang { display: flex; flex-direction: column; align-items: center; margin: 0 21px 0 19px; line-height: 20px; font-size: 15px; }
.tray-wifi { margin-right: 9px; }
.tray-vol { margin-right: 7px; }
.clock { display: flex; flex-direction: column; align-items: flex-end; margin-left: 19px; line-height: 21px; font-size: 15px; }
```
